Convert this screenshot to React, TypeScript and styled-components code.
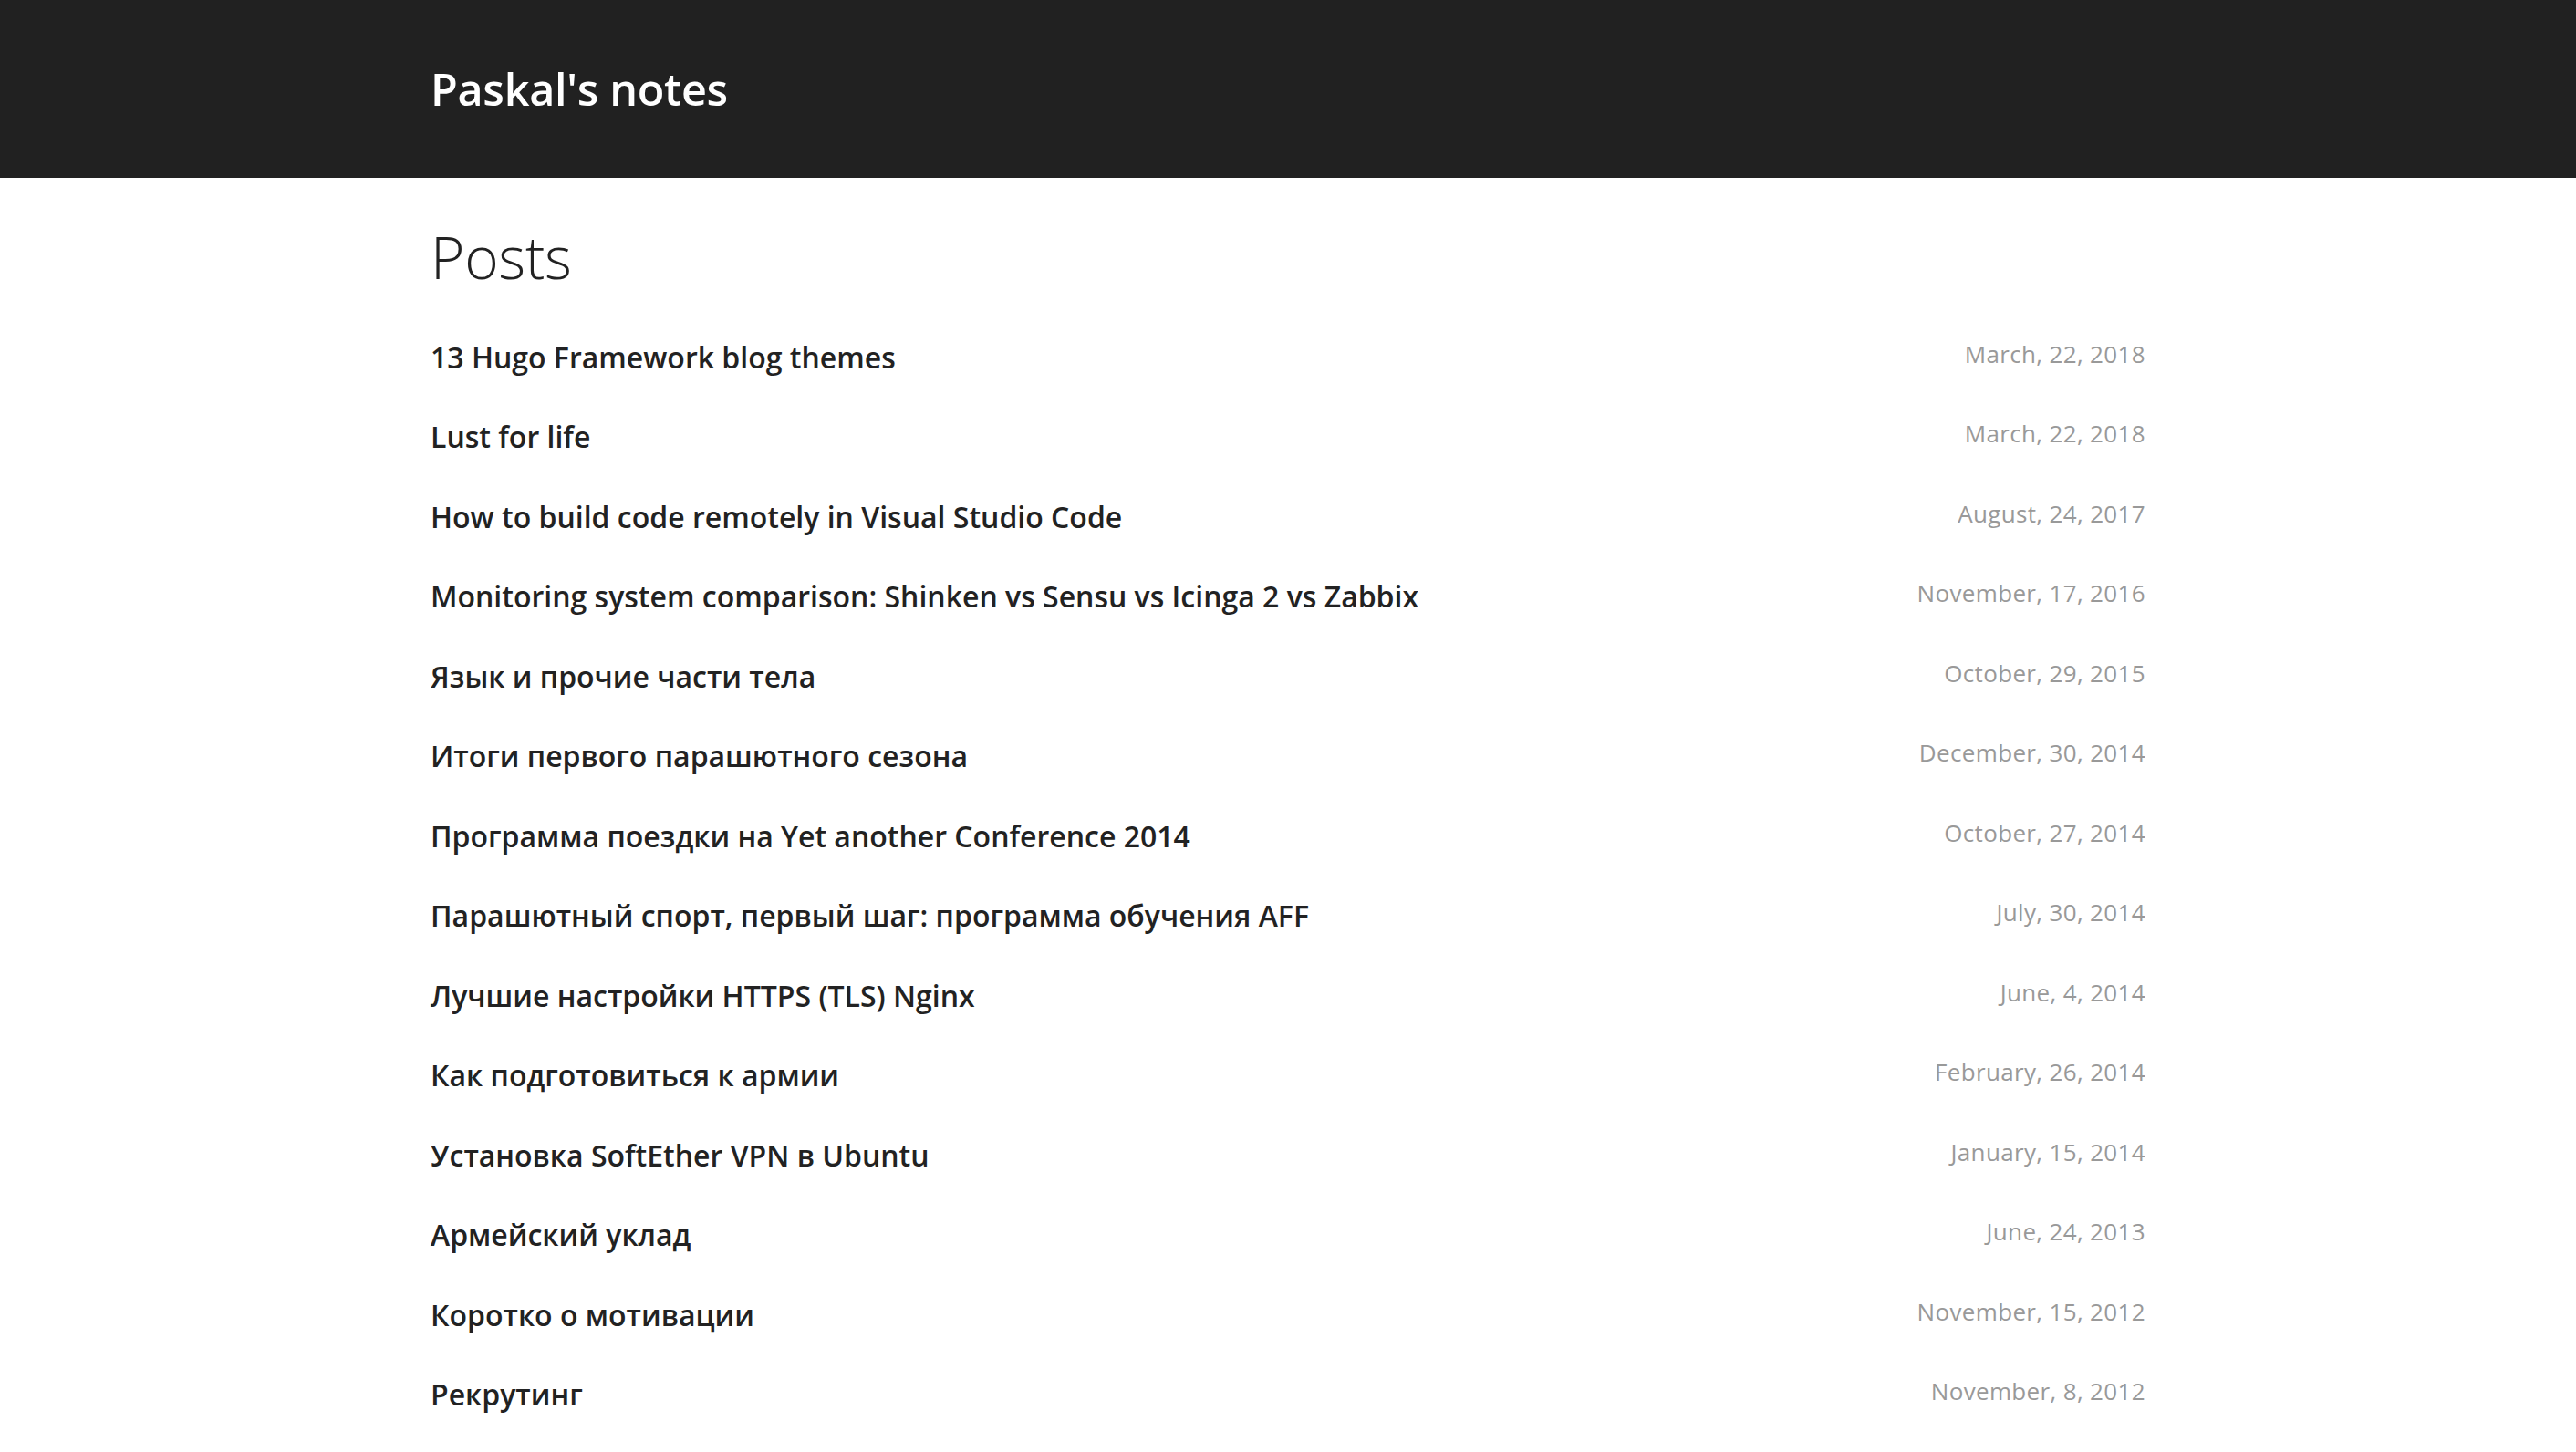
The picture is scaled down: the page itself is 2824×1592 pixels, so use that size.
import { createGlobalStyle, styled } from "styled-components";

/**
 * App
 * Blog index page: dark top bar with the site name, then the list of posts
 * with their dates on the right.
 */

type Post = {
  title: string;
  date: string;
};

const posts: Post[] = [
  { title: "13 Hugo Framework blog themes", date: "March, 22, 2018" },
  { title: "Lust for life", date: "March, 22, 2018" },
  { title: "How to build code remotely in Visual Studio Code", date: "August, 24, 2017" },
  {
    title: "Monitoring system comparison: Shinken vs Sensu vs Icinga 2 vs Zabbix",
    date: "November, 17, 2016",
  },
  { title: "Язык и прочие части тела", date: "October, 29, 2015" },
  { title: "Итоги первого парашютного сезона", date: "December, 30, 2014" },
  { title: "Программа поездки на Yet another Conference 2014", date: "October, 27, 2014" },
  { title: "Парашютный спорт, первый шаг: программа обучения AFF", date: "July, 30, 2014" },
  { title: "Лучшие настройки HTTPS (TLS) Nginx", date: "June, 4, 2014" },
  { title: "Как подготовиться к армии", date: "February, 26, 2014" },
  { title: "Установка SoftEther VPN в Ubuntu", date: "January, 15, 2014" },
  { title: "Армейский уклад", date: "June, 24, 2013" },
  { title: "Коротко о мотивации", date: "November, 15, 2012" },
  { title: "Рекрутинг", date: "November, 8, 2012" },
];

const GlobalStyle = createGlobalStyle`
  html, body {
    margin: 0;
    padding: 0;
    background: #fff;
  }
  body {
    font-family: "Open Sans", "Noto Sans", sans-serif;
    color: #222;
  }
`;

const Container = styled.div`
  width: 1880px;
  margin: 0 auto;
`;

const TopBar = styled.header`
  height: 195px;
  background-color: #212121;
  display: flex;
  align-items: center;
`;

const SiteTitle = styled.a`
  font-size: 48.5px;
  font-weight: 600;
  line-height: 1;
  color: #fff;
  text-decoration: none;
  letter-spacing: -0.3px;
`;

const Main = styled.main`
  padding-top: 49px;
  padding-bottom: 60px;
`;

const PageTitle = styled.h1`
  margin: 0;
  font-size: 64px;
  font-weight: 300;
  line-height: 76.8px;
  color: #222;
  letter-spacing: -0.3px;
`;

const PostList = styled.ul`
  list-style: none;
  margin: 51px 0 0;
  padding: 0;
  display: flex;
  flex-direction: column;
  gap: 47.5px;
`;

const PostRow = styled.li`
  display: flex;
  justify-content: space-between;
  align-items: flex-start;
`;

const PostLink = styled.a`
  font-size: 32px;
  font-weight: 600;
  line-height: 40px;
  color: #222;
  text-decoration: none;
`;

const PostDate = styled.span`
  font-size: 26px;
  font-weight: 400;
  line-height: 32px;
  letter-spacing: 0.35px;
  color: #999;
`;

const App = () => {
  return (
    <>
      <GlobalStyle />
      <TopBar>
        <Container>
          <SiteTitle href="#">Paskal's notes</SiteTitle>
        </Container>
      </TopBar>
      <Main>
        <Container>
          <PageTitle>Posts</PageTitle>
          <PostList>
            {posts.map((post) => (
              <PostRow key={post.title}>
                <PostLink href="#">{post.title}</PostLink>
                <PostDate>{post.date}</PostDate>
              </PostRow>
            ))}
          </PostList>
        </Container>
      </Main>
    </>
  );
};

export default App;
